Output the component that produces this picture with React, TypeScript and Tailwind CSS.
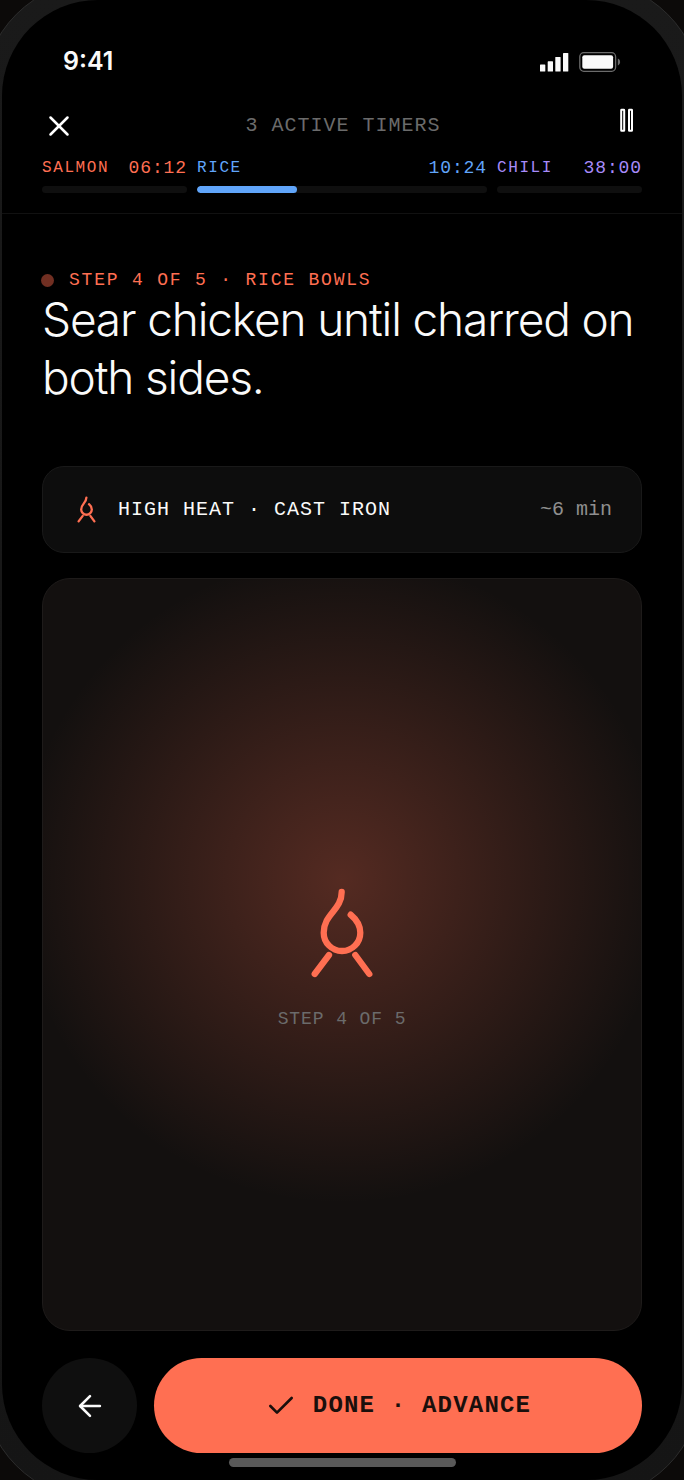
import { ArrowLeft, Check, X } from 'lucide-react'

type Timer = {
  name: string
  left: string
  progress: number
  text: string
  bar: string
}

const timers: Timer[] = [
  { name: 'SALMON', left: '06:12', progress: 0, text: 'text-[#ff6f52]', bar: 'bg-[#ff6f52]' },
  { name: 'RICE', left: '10:24', progress: 34.5, text: 'text-[#60a5fa]', bar: 'bg-[#60a5fa]' },
  { name: 'CHILI', left: '38:00', progress: 0, text: 'text-[#a78bfa]', bar: 'bg-[#a78bfa]' },
]

function FlameIcon({ size, strokeWidth }: { size: number; strokeWidth: number }) {
  return (
    <svg
      width={size}
      height={size}
      viewBox="0 0 100 100"
      fill="none"
      stroke="currentColor"
      strokeWidth={strokeWidth}
      strokeLinecap="round"
      className="shrink-0 text-[#ff6f52]"
      aria-hidden="true"
    >
      <path d="M49.7 9C49.7 27 31.7 31 31.7 49.7A18.3 18.3 0 0 0 68.3 49.7C68.3 42 64.5 36.5 58.7 31.7" />
      <path d="M37 72 22.7 91M63.3 72 77.3 91" />
    </svg>
  )
}

function StatusBar() {
  return (
    <div className="flex h-9 items-center justify-between px-[21px] text-[#fafafa]">
      <span className="text-[25px] font-semibold">9:41</span>
      <div className="flex items-center gap-[10px]">
        {/* Signal */}
        <svg width="29" height="20" viewBox="0 0 29 20" fill="currentColor" aria-hidden="true">
          <rect x="0" y="12.5" width="5.3" height="7" rx="0.6" />
          <rect x="7.7" y="9.3" width="5.3" height="10.2" rx="0.6" />
          <rect x="15.3" y="5" width="5.3" height="14.5" rx="0.6" />
          <rect x="23" y="1" width="5.3" height="18.5" rx="0.6" />
        </svg>
        {/* Battery */}
        <svg width="42" height="20" viewBox="0 0 42 20" fill="none" aria-hidden="true">
          <rect x="0.8" y="0.7" width="35.8" height="18.6" rx="4" stroke="#6b6b6b" strokeWidth="1.3" />
          <rect x="3.3" y="3.2" width="30.8" height="13.6" rx="2" fill="currentColor" />
          <path d="M38.8 6.6c1.3.5 2.3 1.8 2.3 3.4s-1 2.9-2.3 3.4z" fill="#6b6b6b" />
        </svg>
      </div>
    </div>
  )
}

function TimerTrack({ timer }: { timer: Timer }) {
  return (
    <div>
      <div className={`flex items-center justify-between font-['Liberation_Mono',monospace] leading-5 ${timer.text}`}>
        <span className="text-base leading-5 tracking-widest">{timer.name}</span>
        <span className="text-lg leading-5 tracking-wider">{timer.left}</span>
      </div>
      <div className="mt-2 h-[7px] overflow-hidden rounded-full bg-[#0f0f0f]">
        <div className={`h-full rounded-full ${timer.bar}`} style={{ width: `${timer.progress}%` }} />
      </div>
    </div>
  )
}

export default function App() {
  return (
    <div className="flex min-h-screen flex-col overflow-hidden bg-[#0c0a09] font-['Inter',sans-serif]">
      {/* Phone body, bleeding past the window edges */}
      <div className="-mx-[18px] -my-5 flex flex-1 flex-col rounded-[116px] border border-[#2c2c2c] bg-linear-to-b from-[#1a1a1a] to-[#151515] p-[19px]">
        <div className="flex flex-1 flex-col rounded-[96px] bg-black">
          <header className="border-b border-[#111111] px-10 pt-11 pb-5">
            <StatusBar />
            <div className="mt-7 flex h-9 items-center justify-between">
              <button type="button" aria-label="Close" className="text-white">
                <X size={34} strokeWidth={1.8} />
              </button>
              <h1 className="font-['Liberation_Mono',monospace] text-xl tracking-wider text-[#6b6b6b]">
                3 ACTIVE TIMERS
              </h1>
              <button type="button" aria-label="Pause" className="flex w-8 justify-center self-start text-white">
                <svg width="24" height="24" viewBox="0 0 24 24" fill="none" stroke="currentColor" strokeWidth="2">
                  <rect x="7.2" y="1.8" width="3" height="21" rx="0.4" />
                  <rect x="15" y="1.8" width="3" height="21" rx="0.4" />
                </svg>
              </button>
            </div>
            <div className="mt-[14px] grid grid-cols-[1fr_2fr_1fr] gap-[10px]">
              {timers.map((timer) => (
                <TimerTrack key={timer.name} timer={timer} />
              ))}
            </div>
          </header>

          <main className="flex flex-1 flex-col px-10 pt-14">
            <div className="flex h-5 items-center gap-[15px]">
              <span className="-ml-px size-[13px] rounded-full bg-[#712f22]" />
              <p className="font-['Liberation_Mono',monospace] text-lg tracking-widest text-[#ff6f52]">
                STEP 4 OF 5 · RICE BOWLS
              </p>
            </div>
            <h2 className="text-[46px] leading-[58px] font-light tracking-tight text-[#fafafa]">
              Sear chicken until charred on both sides.
            </h2>

            <div className="mt-15 flex items-center rounded-[22px] border border-[#191919] bg-[#0d0d0d] px-[29px] py-7 font-['Liberation_Mono',monospace] text-xl">
              <FlameIcon size={29} strokeWidth={8} />
              <span className="ml-[17px] tracking-wider text-[#fafafa]">HIGH HEAT · CAST IRON</span>
              <span className="ml-auto text-[#8f8f8f]">~6 min</span>
            </div>

            <div className="mt-[25px] flex flex-1 flex-col items-center justify-center gap-6 rounded-[28px] border border-[#1e1b1a] bg-[#13100f] bg-[radial-gradient(circle_at_50%_40%,rgba(255,111,82,0.28),transparent_60%)] pt-1">
              <FlameIcon size={100} strokeWidth={6.3} />
              <p className="font-['Liberation_Mono',monospace] text-lg leading-6 tracking-wider text-[#6b6b6b]">
                STEP 4 OF 5
              </p>
            </div>
          </main>

          <footer className="px-10 pt-[27px] pb-[13px]">
            <div className="flex gap-[17px]">
              <button
                type="button"
                aria-label="Previous step"
                className="flex size-[95px] shrink-0 items-center justify-center rounded-full bg-[#0f0f0f] text-[#fafafa]"
              >
                <ArrowLeft size={34} strokeWidth={1.8} />
              </button>
              <button
                type="button"
                className="flex flex-1 items-center justify-center gap-4 rounded-full bg-[#ff6f52] font-['Liberation_Mono',monospace] text-2xl font-bold tracking-wider text-[#1a0f0c]"
              >
                <Check size={32} strokeWidth={2} />
                DONE · ADVANCE
              </button>
            </div>
            <div className="mx-auto mt-[5px] h-[9px] w-[227px] rounded-full bg-[#595959]" />
          </footer>
        </div>
      </div>
    </div>
  )
}
